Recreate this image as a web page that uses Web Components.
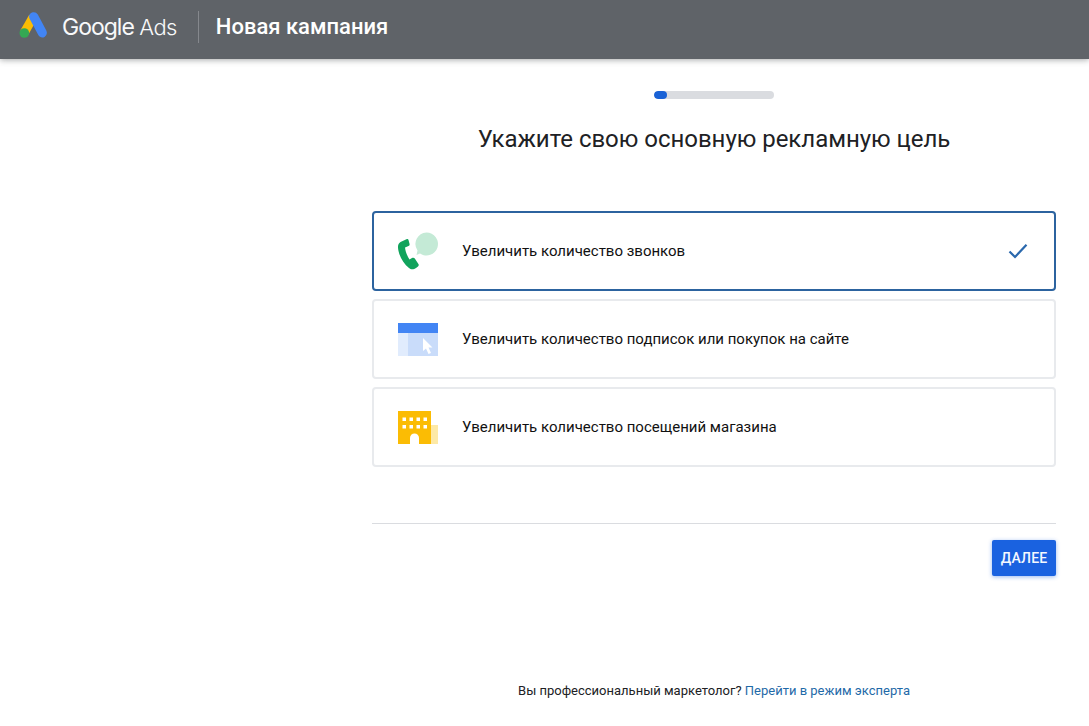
<!DOCTYPE html>
<html lang="ru"><head><meta charset="utf-8"><title>Новая кампания</title>
<style>html,body{margin:0;padding:0;background:#fff;font-family:Roboto,"Liberation Sans",sans-serif;height:726px;overflow:hidden}</style>
</head><body>
<ads-app></ads-app>
<template id="t-header"><style>
:host{display:flex;align-items:center;box-sizing:border-box;height:59px;padding-bottom:5px;background:#5f6368;box-shadow:0 1px 6px rgba(60,64,67,.45);position:relative;z-index:1;color:#fff}
svg{display:block;margin:0 0 4px 18px;flex:none}
.brand{margin-left:14px;font:400 23px/32px "Inter","Roboto",sans-serif;letter-spacing:-1px;white-space:nowrap;color:#f8f9fa}
.brand span{font-weight:300;font-size:22px;letter-spacing:-.6px}
.sep{width:1px;height:32px;background:#85888d;margin:0 17px 0 21px;flex:none}
.title{font:500 22px/32px Roboto,sans-serif;white-space:nowrap}
</style>
<svg width="30" height="28" viewBox="0 0 30 28"><path d="M11.2 3.8 2.3 19.6l8 4.2 8-14.3z" fill="#fbbc04"/><path d="M14 1.600c-2.500 1-3.600 3.700-2.400 6.200l8.700 16.300c1.200 2.200 4 3 6.200 1.800 2.300-1.300 3-4 1.800-6.300L19.800 3.600C18.600 1.400 16.200.6 14 1.600z" fill="#4285f4"/><circle cx="6.300" cy="22" r="4.800" fill="#34a853"/></svg>
<span class="brand">Google <span>Ads</span></span><span class="sep"></span><span class="title"><slot></slot></span></template>

<template id="t-progress"><style>
:host{display:block;width:120px;height:8px;border-radius:4px;background:#dadce0;overflow:hidden}
i{display:block;width:13px;height:8px;border-radius:4px;background:#1a62d6}
</style><i></i></template>

<template id="t-card"><style>
:host{display:flex;align-items:center;box-sizing:border-box;height:80px;border:2px solid #e8eaed;border-radius:4px;background:#fff;padding-left:24px;padding-right:26px;font:400 15px/20px Roboto,sans-serif;color:#111;}
:host([selected]){border-color:#2c639f}
.ic{width:40px;height:48px;flex:none;display:flex;align-items:center;justify-content:center}
.txt{margin-left:24px;flex:1;white-space:nowrap}
.chk{display:none;flex:none}
:host([selected]) .chk{display:block}
</style><span class="ic"><slot name="icon"></slot></span><span class="txt"><slot></slot></span>
<svg class="chk" width="20" height="16" viewBox="0 0 20 16"><path d="M1.500 8.500 7 14 18.500 1.800" fill="none" stroke="#2a68ad" stroke-width="2.200"/></svg></template>

<template id="t-btn"><style>
:host{display:inline-flex;align-items:center;justify-content:center;width:64px;height:36px;background:#1a62e0;color:#f4f8ff;border-radius:2px;box-shadow:0 1px 4px rgba(26,98,224,.45);font:500 14px/20px Roboto,sans-serif;letter-spacing:.2px}
</style><slot></slot></template>

<template id="t-app"><style>
:host{display:block}
main{display:flex;flex-direction:column;align-items:center;margin-left:372px;width:684px}
ads-progress{margin-top:32px}
h1{margin:24px 0 0;font:400 24px/32px Roboto,sans-serif;color:#202124;letter-spacing:-.03px;white-space:nowrap}
.cards{display:flex;flex-direction:column;gap:8px;align-self:stretch;margin-top:56px}
hr{align-self:stretch;border:0;height:1px;background:#dadce0;margin:56px 0 16px}
.act{align-self:stretch;display:flex;justify-content:flex-end}
.foot{margin-top:106px;font:400 13px/18px Roboto,sans-serif;color:#202124;white-space:nowrap}
.foot a{color:#1f6aa8;text-decoration:none}
svg{display:block}
</style>
<ads-header>Новая кампания</ads-header>
<main>
<ads-progress></ads-progress>
<h1>Укажите свою основную рекламную цель</h1>
<div class="cards">
<ads-card selected><svg slot="icon" width="40" height="38" viewBox="0 0 40 38"><path d="M28.500.500a11.500 11.500 0 1 1-6.500 21l-3.500 1.500 1-4.500A11.500 11.500 0 0 1 28.500.500z" fill="#c4ead6"/><path d="M9 7 2.500 10C-.5 12-.3 15 .5 19 2 26 6 32 11 36c2 2 5 1.500 7 0l2-1.500c.8-.7 1-1.500.4-2.500l-3.600-5.500c-.8-1-1.800-1.100-2.800-.5l-2.500 1.500C9.500 24.500 7.500 20 7 15.500l3.500-1.500c1-.5 1.300-1.400 1-2.200l-1-3.800C10.200 7 9.800 6.700 9 7z" fill="#11a35c"/></svg>Увеличить количество звонков</ads-card>
<ads-card><svg slot="icon" width="40" height="33" viewBox="0 0 40 33"><rect y="10" width="10" height="23" fill="#e1ecfd"/><rect x="10" y="10" width="30" height="23" fill="#c9dcfa"/><rect width="40" height="10" fill="#4285f4"/><path d="M25 15l9.500 9.500h-4l2.500 5.500-2.500 1L28 25.500 25 28z" fill="#fff"/></svg>Увеличить количество подписок или покупок на сайте</ads-card>
<ads-card><svg slot="icon" width="40" height="33" viewBox="0 0 40 33"><rect x="33" y="14" width="7" height="19" fill="#fde9a6"/><rect width="33" height="33" fill="#fbbc04"/><path d="M12 33v-6a4.500 4.500 0 0 1 9 0v6z" fill="#fff"/><path d="M4.500 6.500h3.500V10H4.500zm7 0H15V10h-3.500zm7 0H22V10h-3.500zm7 0H29V10h-3.500zM4.500 14H8v3.500H4.500zm7 0H15v3.500h-3.500zm7 0H22v3.500h-3.500zm7 0H29v3.500h-3.500z" fill="#fff"/></svg>Увеличить количество посещений магазина</ads-card>
</div>
<hr>
<div class="act"><ads-button>ДАЛЕЕ</ads-button></div>
<div class="foot">Вы профессиональный маркетолог? <a href="#">Перейти в режим эксперта</a></div>
</main></template>
<script>
function def(name,id){customElements.define(name,class extends HTMLElement{constructor(){super();this.attachShadow({mode:'open'}).appendChild(document.getElementById(id).content.cloneNode(true));}});}
def('ads-header','t-header');def('ads-progress','t-progress');def('ads-card','t-card');def('ads-button','t-btn');def('ads-app','t-app');
</script>
</body></html>
